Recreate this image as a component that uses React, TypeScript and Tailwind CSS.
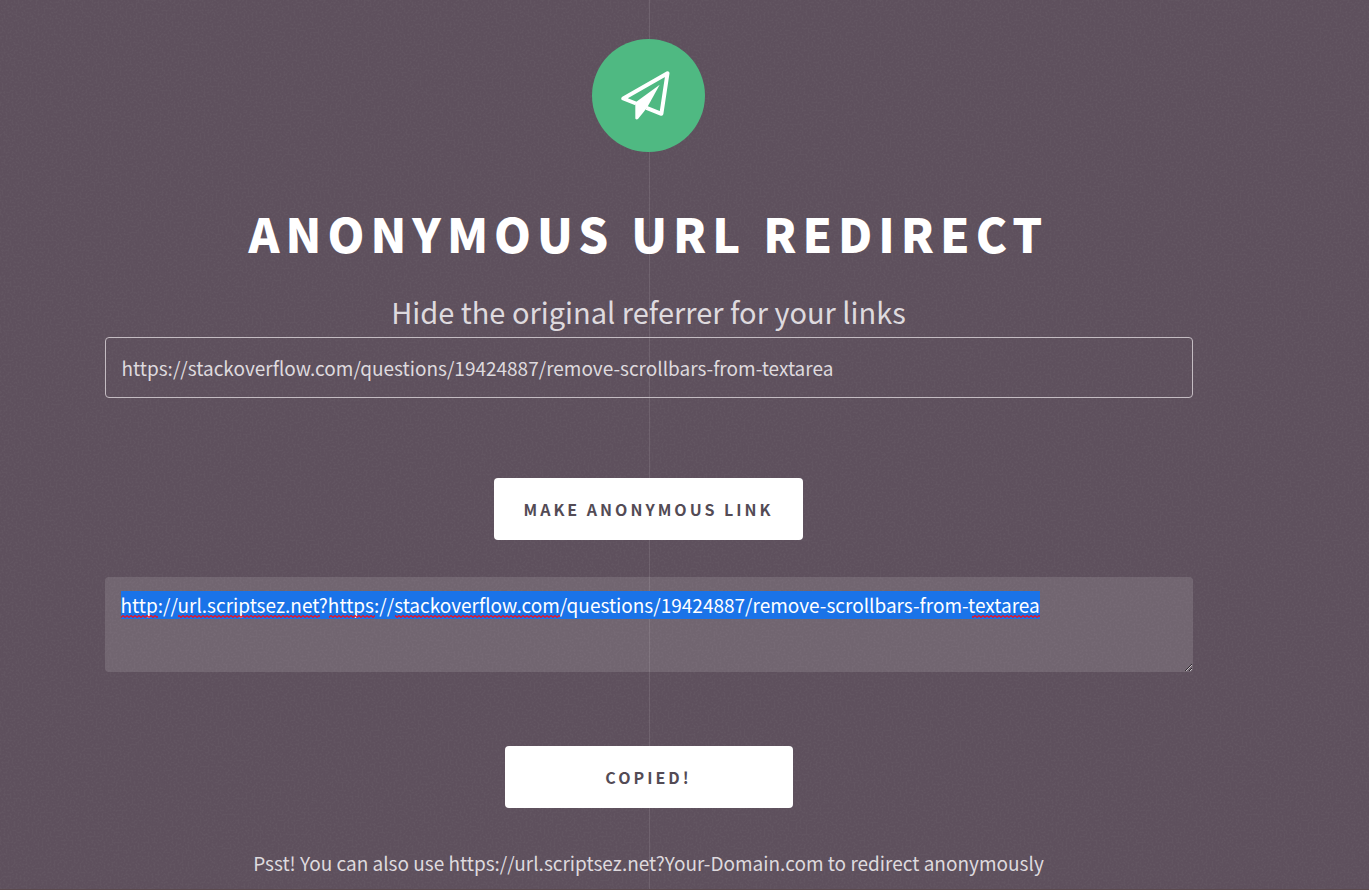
import { useEffect, useRef, useState } from "react";

const source = "https://stackoverflow.com/questions/19424887/remove-scrollbars-from-textarea";

const flagged = [
  [0, 37],
  [57, 142],
  [208, 46],
  [274, 165],
  [851, 68],
];

function PlaneIcon() {
  return (
    <svg viewBox="0 0 56 50" className="h-[50px] w-[56px]" fill="none" aria-hidden="true">
      <path
        d="M15 32.5 2.3 27.5 46.5 2.3 40.4 42.8 25.5 36.8"
        stroke="#fff"
        strokeWidth="4"
        strokeLinejoin="round"
      />
      <path d="M38.7 13.8 14.3 31.5V47.5Q15.5 49.3 17.2 47.8L26 36.8Z" fill="#fff" />
    </svg>
  );
}

function Grain() {
  return (
    <svg className="pointer-events-none absolute inset-0 h-full w-full opacity-15" aria-hidden="true">
      <filter id="grain">
        <feTurbulence type="fractalNoise" baseFrequency="0.5" numOctaves="2" seed="4" />
        <feColorMatrix values="0 0 0 0 0.2  0 0 0 0 0.18  0 0 0 0 0.2  5 0 0 0 -2.3" />
      </filter>
      <rect width="100%" height="100%" filter="url(#grain)" />
    </svg>
  );
}

export default function App() {
  const [url, setUrl] = useState(source);
  const [result, setResult] = useState("http://url.scriptsez.net?" + source);
  const output = useRef<HTMLTextAreaElement>(null);

  useEffect(() => {
    output.current?.focus();
    output.current?.select();
  }, []);

  return (
    <div className="relative min-h-screen w-full overflow-hidden border-b border-[#5b4a4e] bg-[#5e505d] pr-[72px] font-['Noto_Sans_CJK_SC','Noto_Sans',sans-serif] text-[#dedade]">
      <Grain />
      <main className="relative flex justify-center">
        {/* Vertical rule behind the content */}
        <div className="absolute inset-y-0 left-1/2 w-px bg-white/10" />

        <div className="relative flex w-full max-w-[1088px] flex-col items-center pt-[39px]">
          <div className="flex size-[113px] items-center justify-center rounded-full bg-[#4fb982]">
            <PlaneIcon />
          </div>

          <h1 className="mt-[49px] text-[47px] leading-[64px] font-black tracking-[6px] text-white uppercase">
            Anonymous URL Redirect
          </h1>
          <label htmlFor="url" className="mt-6 text-[29px] leading-[44px]">
            Hide the original referrer for your links
          </label>

          <input
            id="url"
            type="text"
            value={url}
            onChange={(e) => setUrl(e.target.value)}
            className="mt-1 h-[61px] w-full rounded-sm border border-[#c4bcc2] bg-transparent px-4 text-[19px] outline-none"
          />

          <button
            type="button"
            onClick={() => setResult("http://url.scriptsez.net?" + url)}
            className="mt-20 h-[62px] w-[309px] rounded-sm bg-white text-[16px] font-bold tracking-[3px] text-[#534b55] uppercase"
          >
            Make Anonymous Link
          </button>

          <div className="relative mt-[37px] w-full">
            <textarea
              ref={output}
              aria-label="Anonymous link"
              value={result}
              spellCheck={false}
              onChange={(e) => setResult(e.target.value)}
              className="block h-[95px] w-full resize-y overflow-hidden rounded-sm bg-white/12 px-4 py-[14px] text-[19px] leading-[28px] text-white outline-none selection:bg-[#1a73e8] selection:text-white"
            />
            <svg className="pointer-events-none absolute top-[38px] left-4 h-[3px] w-[930px]" aria-hidden="true">
              <pattern id="wave" width="4" height="3" patternUnits="userSpaceOnUse">
                <path d="M-1 1.5 0 2.4 2 .6 4 2.4 5 1.5" stroke="#f01020" strokeWidth="1.2" fill="none" />
              </pattern>
              {flagged.map(([x, width]) => (
                <rect key={x} x={x} width={width} height="3" fill="url(#wave)" />
              ))}
            </svg>
          </div>

          <button
            type="button"
            className="mt-[74px] h-[62px] w-[288px] rounded-sm bg-white text-[16px] font-bold tracking-[3px] text-[#534b55] uppercase"
          >
            Copied!
          </button>

          <p className="mt-[39px] pb-[10px] text-[19px] leading-8">
            Psst! You can also use https://url.scriptsez.net?Your-Domain.com to redirect anonymously
          </p>
        </div>
      </main>
    </div>
  );
}
